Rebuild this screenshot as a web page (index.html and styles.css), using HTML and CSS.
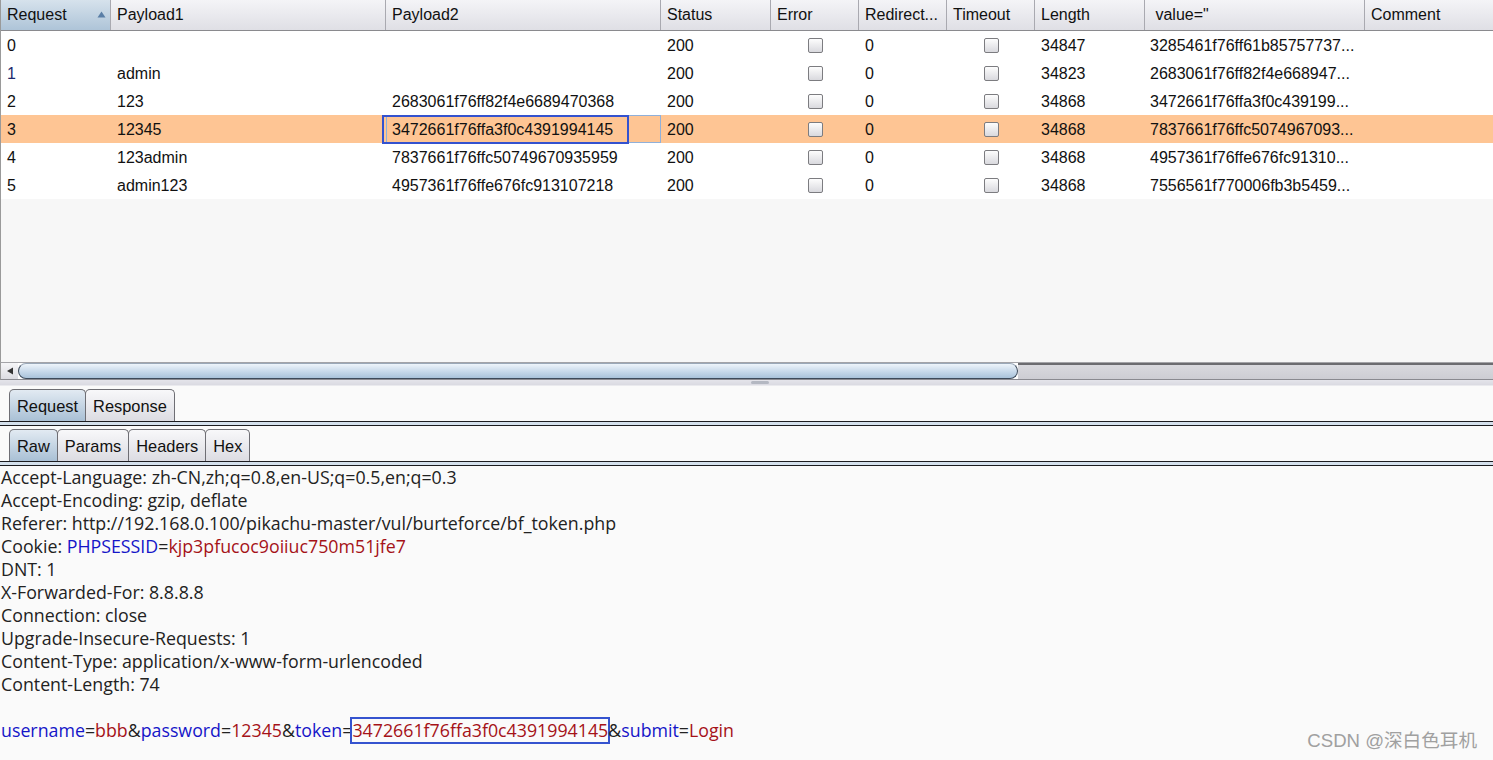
FILE: index.html
```html
<!DOCTYPE html>
<html>
<head>
<meta charset="utf-8">
<link rel="stylesheet" href="styles.css">
</head>
<body>
<div class="app">
  <div class="results">
    <div class="row head">
      <div class="hc sorted">Request<svg class="sort" width="9" height="7" viewBox="0 0 9 7"><path d="M0.5 6.5 L4.5 0.5 L8.5 6.5 Z" fill="#5a7ea6"/></svg></div>
      <div class="hc">Payload1</div>
      <div class="hc">Payload2</div>
      <div class="hc">Status</div>
      <div class="hc">Error</div>
      <div class="hc">Redirect...</div>
      <div class="hc">Timeout</div>
      <div class="hc">Length</div>
      <div class="hc">&nbsp;value="</div>
      <div class="hc">Comment</div>
    </div>
    <div class="row">
      <div class="c">0</div><div class="c"></div><div class="c"></div><div class="c">200</div>
      <div class="c cb"><span class="box"></span></div><div class="c">0</div><div class="c cb"><span class="box"></span></div>
      <div class="c">34847</div><div class="c v">3285461f76ff61b85757737...</div><div class="c"></div>
    </div>
    <div class="row">
      <div class="c idx">1</div><div class="c">admin</div><div class="c"></div><div class="c">200</div>
      <div class="c cb"><span class="box"></span></div><div class="c">0</div><div class="c cb"><span class="box"></span></div>
      <div class="c">34823</div><div class="c v">2683061f76ff82f4e668947...</div><div class="c"></div>
    </div>
    <div class="row">
      <div class="c">2</div><div class="c">123</div><div class="c">2683061f76ff82f4e6689470368</div><div class="c">200</div>
      <div class="c cb"><span class="box"></span></div><div class="c">0</div><div class="c cb"><span class="box"></span></div>
      <div class="c">34868</div><div class="c v">3472661f76ffa3f0c439199...</div><div class="c"></div>
    </div>
    <div class="row selected">
      <div class="c">3</div><div class="c">12345</div><div class="c focus">3472661f76ffa3f0c4391994145<span class="mark"></span></div><div class="c">200</div>
      <div class="c cb"><span class="box"></span></div><div class="c">0</div><div class="c cb"><span class="box"></span></div>
      <div class="c">34868</div><div class="c v">7837661f76ffc5074967093...</div><div class="c"></div>
    </div>
    <div class="row">
      <div class="c">4</div><div class="c">123admin</div><div class="c">7837661f76ffc50749670935959</div><div class="c">200</div>
      <div class="c cb"><span class="box"></span></div><div class="c">0</div><div class="c cb"><span class="box"></span></div>
      <div class="c">34868</div><div class="c v">4957361f76ffe676fc91310...</div><div class="c"></div>
    </div>
    <div class="row">
      <div class="c">5</div><div class="c">admin123</div><div class="c">4957361f76ffe676fc913107218</div><div class="c">200</div>
      <div class="c cb"><span class="box"></span></div><div class="c">0</div><div class="c cb"><span class="box"></span></div>
      <div class="c">34868</div><div class="c v">7556561f770006fb3b5459...</div><div class="c"></div>
    </div>
    <div class="filler"></div>
  </div>

  <div class="hscroll">
    <div class="arrow"><svg width="8" height="8" viewBox="0 0 8 8"><path d="M1 4 L7 0.5 L7 7.5 Z" fill="#333"/></svg></div>
    <div class="thumb"></div>
    <div class="track"></div>
  </div>
  <div class="split"><span class="grip"></span></div>

  <div class="tabs">
    <div class="tab active">Request</div>
    <div class="tab">Response</div>
  </div>
  <div class="tabline"></div>
  <div class="tabs sub">
    <div class="tab active">Raw</div>
    <div class="tab">Params</div>
    <div class="tab">Headers</div>
    <div class="tab">Hex</div>
  </div>
  <div class="tabline"></div>

  <div class="raw">
    <div class="ln">Accept-Language: zh-CN,zh;q=0.8,en-US;q=0.5,en;q=0.3</div>
    <div class="ln">Accept-Encoding: gzip, deflate</div>
    <div class="ln">Referer: http://192.168.0.100/pikachu-master/vul/burteforce/bf_token.php</div>
    <div class="ln">Cookie: <span class="k">PHPSESSID</span>=<span class="val">kjp3pfucoc9oiiuc750m51jfe7</span></div>
    <div class="ln">DNT: 1</div>
    <div class="ln">X-Forwarded-For: 8.8.8.8</div>
    <div class="ln">Connection: close</div>
    <div class="ln">Upgrade-Insecure-Requests: 1</div>
    <div class="ln">Content-Type: application/x-www-form-urlencoded</div>
    <div class="ln">Content-Length: 74</div>
    <div class="ln">&nbsp;</div>
    <div class="ln"><span class="k">username</span>=<span class="val">bbb</span>&amp;<span class="k">password</span>=<span class="val">12345</span>&amp;<span class="k">token</span>=<span class="val boxed">3472661f76ffa3f0c4391994145</span>&amp;<span class="k">submit</span>=<span class="val">Login</span></div>
  </div>

  <div class="watermark">CSDN @深白色耳机</div>
</div>
</body>
</html>
```
FILE: styles.css
```css
html, body {
  margin: 0;
  padding: 0;
}
body {
  background: #fafafa;
  width: 1493px;
  height: 760px;
  overflow: hidden;
}
.app {
  position: relative;
  width: 1493px;
  height: 760px;
  display: flex;
  flex-direction: column;
}

/* results table */
.results {
  height: 362px;
  display: flex;
  flex-direction: column;
  border-left: 1px solid #9a9a9a;
  box-sizing: border-box;
  font-family: "Liberation Sans", Arial, sans-serif;
  font-size: 16px;
  color: #111;
}
.row {
  display: grid;
  grid-template-columns: 110px 275px 275px 110px 88px 88px 88px 110px 220px 128px;
  height: 28px;
  background: #fff;
}
.row.head {
  height: 30px;
  border-bottom: 1px solid #8a8a8e;
  background: linear-gradient(#f4f4f7, #dfdfe5);
}
.hc {
  position: relative;
  display: flex;
  align-items: center;
  padding-left: 6px;
  border-right: 1px solid #a9a9b0;
  white-space: nowrap;
  overflow: hidden;
  color: #111;
}
.hc:last-child {
  border-right: none;
}
.hc.sorted {
  background: linear-gradient(#d6e2ec, #aec4d8);
}
.sort {
  position: absolute;
  right: 4px;
  top: 11px;
}
.c {
  position: relative;
  display: flex;
  align-items: center;
  padding-left: 6px;
  padding-top: 1px;
  box-sizing: border-box;
  white-space: nowrap;
  overflow: visible;
}
.c.idx {
  color: #1d2a6e;
}
.c.v {
  padding-left: 5px;
}
.c.cb {
  justify-content: center;
  padding-left: 0;
}
.box {
  width: 13px;
  height: 13px;
  border: 1px solid #7c7c80;
  border-radius: 2px;
  background: linear-gradient(#fdfdfd, #d9d9de);
}
.row.selected {
  background: #fec594;
}
.c.focus {
  box-shadow: inset 0 0 0 1px #8fb0da;
}
.mark {
  position: absolute;
  left: -4px;
  top: 0;
  width: 243px;
  height: 25px;
  border: 2px solid #3452cf;
}
.filler {
  flex: 1;
  background: #f7f7f7;
}

/* horizontal scrollbar */
.hscroll {
  height: 16px;
  display: flex;
  border-top: 1px solid #a4a4a8;
  border-bottom: 1px solid #8a8a90;
  border-left: 1px solid #9a9a9a;
  background: #fff;
}
.arrow {
  width: 17px;
  display: flex;
  align-items: center;
  justify-content: center;
  background: linear-gradient(#f6f6f8, #dcdce2);
}
.thumb {
  width: 1000px;
  border: 1px solid #3d4a5a;
  border-top-color: #9aa8b8;
  border-radius: 9px;
  box-sizing: border-box;
  background: linear-gradient(#eef4fa, #c3d6e8 60%, #a9c2da);
}
.track {
  flex: 1;
  border-top: 2px solid #6c6c70;
  background: linear-gradient(#d9d9de, #cdcdd3);
}
.split {
  height: 9px;
  display: flex;
  justify-content: center;
  align-items: flex-start;
  background: linear-gradient(#e4e4ea 0, #dadae2 5px, #fafafa 6px);
}
.grip {
  width: 18px;
  height: 3px;
  margin-top: 1px;
  margin-left: 26px;
  border-radius: 2px;
  background: #b4b8c2;
}

/* tabs */
.tabs {
  display: flex;
  padding-left: 9px;
  height: 32px;
  font-family: "Liberation Sans", Arial, sans-serif;
  font-size: 16.4px;
  color: #111;
}
.tabs.sub {
  margin-top: 3px;
}
.tab {
  display: flex;
  align-items: center;
  padding: 2px 7px 0 7px;
  border: 1px solid #6e6e74;
  border-bottom: none;
  border-radius: 5px 5px 0 0;
  background: linear-gradient(#f8f8fa, #dcdce2);
  margin-right: -1px;
}
.tab.active {
  background: linear-gradient(#e2eaf2, #a9c0d5);
}
.tabline {
  height: 3px;
  border-top: 1px solid #1c1c20;
  border-bottom: 1px solid #1c1c20;
  background: #d4e0ec;
}

/* raw text */
.raw {
  font-family: "Open Sans", "Noto Sans", sans-serif;
  font-size: 17.8px;
  color: #222;
  line-height: 23px;
  padding-left: 1px;
}
.ln {
  height: 23px;
  white-space: nowrap;
}
.k {
  color: #1515c8;
}
.val {
  color: #a51218;
}
.boxed {
  display: inline-block;
  height: 23px;
  outline: 2px solid #3553cf;
}
.watermark {
  position: absolute;
  right: 16px;
  bottom: 8px;
  font-family: "Liberation Sans", "Noto Sans CJK SC", sans-serif;
  font-size: 18.6px;
  color: #a0a0a0;
}
```
